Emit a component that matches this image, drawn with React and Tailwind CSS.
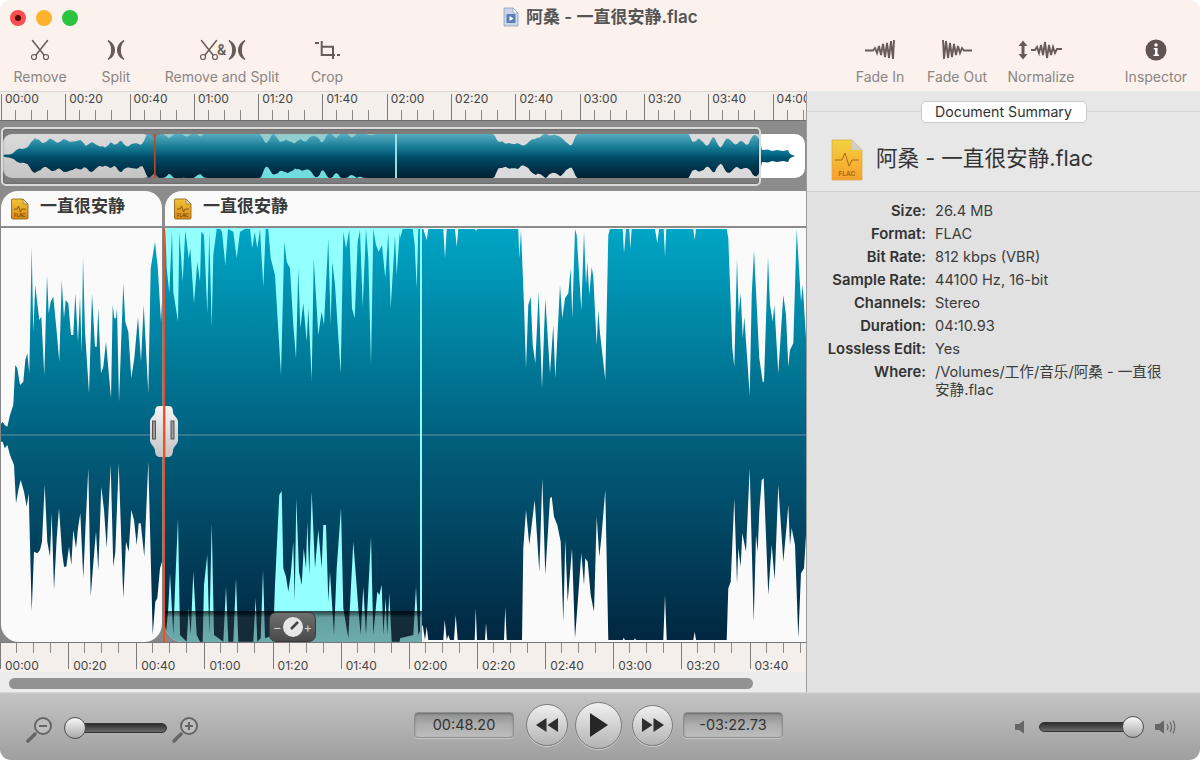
import React from "react";

const pairs = (a, ox, oy) => {
  const out = [];
  for (let i = 0; i < a.length; i += 2) out.push([ox + a[i] / 3, oy + a[i + 1] / 3 - 228]);
  return out;
};
const T1 = [0,600,8,590,14,600,22,605,30,570,40,540,46,420,52,430,60,480,70,470,76,405,82,385,88,445,95,65,100,320,106,180,112,235,118,285,124,275,133,450,141,150,146,265,152,230,160,215,170,320,178,410,185,165,192,280,197,225,205,235,213,330,220,330,226,205,234,350,240,215,245,385,249,95,255,320,267,505,276,205,285,365,290,365,295,250,303,445,310,425,318,350,322,395,333,520,338,240,343,280,348,280,351,250,357,530,370,175,376,290,385,320,394,460,403,400,414,275,423,410,431,240,445,505,452,130,465,50,473,125,483,290,490,150,496,12,500,130,508,205,516,15,520,200,534,290,538,20,548,170,556,15,566,100,571,70,582,235,592,110,600,170,604,20,612,30,622,265,628,20,635,305,640,90,650,12,660,12,666,20,676,120,684,12,700,20,710,100,720,20,735,12,750,12,757,70,764,20,772,70,780,12,790,185,797,12,805,12,812,100,825,150,843,450,853,50,860,110,870,130,880,300,888,400,895,130,901,310,910,235,920,350,925,250,935,465,941,100,955,330,965,260,972,300,985,40,992,300,997,110,1005,180,1022,445,1030,20,1038,70,1048,15,1056,250,1064,280,1073,50,1080,15,1088,245,1098,12,1105,100,1113,420,1120,12,1128,60,1136,80,1146,60,1156,160,1165,20,1172,250,1185,30,1190,150,1199,20];
const T2 = [0,40,8,12,38,12,44,60,50,190,55,12,70,12,80,45,85,12,130,12,135,100,140,12,165,12,170,65,175,12,225,12,228,18,232,12,355,12,358,100,363,15,372,240,378,430,385,240,392,215,398,360,406,415,416,200,426,490,436,220,450,445,460,300,466,460,480,180,487,280,495,220,505,205,512,130,517,280,525,12,530,30,544,255,552,20,558,180,562,110,568,210,575,125,580,155,590,360,595,255,600,325,616,465,625,30,630,12,668,12,672,85,678,12,688,12,691,70,695,12,765,12,772,55,777,12,791,12,795,95,799,12,880,12,884,45,888,12,980,12,985,40,997,370,1003,425,1011,100,1016,265,1022,205,1028,340,1033,275,1049,510,1055,210,1062,75,1078,400,1088,470,1092,470,1104,95,1110,240,1118,290,1123,240,1135,445,1150,210,1158,270,1165,425,1170,375,1180,355,1190,12,1195,95,1203,230,1208,180,1218,340];
const B1 = [0,20,8,20,14,40,22,30,30,60,42,90,48,205,56,160,62,135,72,170,80,215,86,175,95,530,102,350,112,355,120,345,126,320,134,150,142,320,150,365,155,235,162,465,170,310,177,220,186,350,192,395,199,395,207,335,214,390,220,285,228,340,234,280,241,235,250,430,256,290,265,100,272,485,280,385,288,290,295,405,304,155,312,225,320,340,332,90,340,395,346,350,356,85,370,490,378,320,386,350,394,225,402,255,410,330,416,265,422,265,433,365,445,80,458,600,466,500,472,490,480,400,486,380,490,400,496,620,505,520,510,415,520,600,526,440,534,250,540,600,560,620,566,520,572,600,580,410,590,600,600,620,608,620,612,450,622,360,628,600,635,265,642,600,670,620,678,455,685,620,700,620,708,430,715,620,760,620,767,490,772,620,782,610,789,405,795,610,820,600,825,450,838,180,845,168,850,400,858,425,865,470,872,420,880,320,884,500,889,190,897,410,905,450,911,340,918,400,922,260,928,420,935,170,945,400,955,285,965,400,970,270,978,270,985,500,990,410,1002,600,1010,400,1023,220,1030,520,1045,610,1060,320,1075,520,1082,600,1090,455,1098,600,1113,305,1120,600,1132,470,1138,480,1145,450,1150,600,1157,490,1162,600,1168,475,1175,620,1199,620];
const B2 = [0,610,40,600,48,455,55,600,68,570,75,615,80,575,85,615,130,615,134,555,140,615,145,600,150,615,162,615,167,540,173,615,224,615,227,520,231,615,255,615,258,565,262,615,312,615,316,517,320,615,366,615,370,340,378,225,388,330,404,195,418,410,427,130,436,420,450,190,455,185,462,245,472,270,482,320,490,560,496,315,503,500,516,340,525,610,532,520,544,355,552,450,556,370,563,380,572,480,582,530,590,245,598,365,604,310,616,165,625,615,668,615,671,608,675,615,702,615,705,610,708,615,790,615,795,480,800,615,880,615,884,590,888,615,980,615,985,460,992,440,1003,190,1011,445,1015,340,1022,395,1027,295,1038,350,1049,100,1061,560,1068,300,1073,350,1078,230,1085,135,1091,130,1105,480,1115,330,1124,435,1135,150,1150,380,1160,270,1165,210,1170,330,1175,280,1185,330,1195,610,1203,415,1212,400,1218,300];

const TOP = [...pairs(T1, 0, 225), ...pairs(T2, 400, 225)];
const BOT = [...pairs(B1, 0, 435), ...pairs(B2, 400, 435)];
const fmt = (p) => p.map(([x, y]) => `${x.toFixed(1)} ${y.toFixed(1)}`).join(" L");
const WAVE = `M0 207 L${fmt(TOP)} L806 ${TOP[TOP.length - 1][1].toFixed(1)} L806 ${BOT[BOT.length - 1][1].toFixed(1)} L${fmt([...BOT].reverse())} L0 207 Z`;

const at = (pts, x) => {
  for (let i = 1; i < pts.length; i++) {
    if (pts[i][0] >= x) {
      const [a, b] = [pts[i - 1], pts[i]];
      const t = b[0] === a[0] ? 0 : (x - a[0]) / (b[0] - a[0]);
      return a[1] + (b[1] - a[1]) * t;
    }
  }
  return pts[pts.length - 1][1];
};
const smooth = (pts, x) => {
  let s = 0;
  for (let k = -3; k <= 3; k += 1) s += Math.abs(at(pts, x + k) - 207);
  return s / 7;
};
const ovTop = [];
const ovBot = [];
for (let x = 2; x <= 804; x += 2) {
  const ox = 3 + (x / 1.058) * 0.9962;
  ovTop.push([ox, 35 - Math.min(22, (smooth(TOP, x) * 22 * 1.2) / 207)]);
  ovBot.push([ox, 35 + Math.min(22, (smooth(BOT, x) * 22 * 1.2) / 207)]);
}
const tailT = [[762, 29], [768, 28.5], [772, 30], [777, 29], [783, 30], [788, 29], [790, 33], [795, 35]];
const tailB = [[762, 41], [768, 41.5], [772, 40], [777, 41], [783, 40], [788, 41], [790, 37], [795, 35]];
const OVERVIEW = `M3 35 L${fmt(ovTop)} L${fmt(tailT)} L${fmt([...tailB].reverse())} L${fmt([...ovBot].reverse())} Z`;

const SANS = "font-['Inter','Noto_Sans_CJK_SC',sans-serif]";

const Wave = ({ viewBox, w, id }) => (
  <svg width={w} height="414" viewBox={viewBox} className="block">
    <defs>
      <linearGradient id={id} gradientUnits="userSpaceOnUse" x1="0" y1="0" x2="0" y2="414">
        <stop offset="0" stopColor="#00a6c6" />
        <stop offset="0.5" stopColor="#01617f" />
        <stop offset="1" stopColor="#012640" />
      </linearGradient>
    </defs>
    <rect x="165" y="0" width="256" height="414" fill="#93ffff" />
    <path d={WAVE} fill={`url(#${id})`} />
    <line x1="0" x2="806" y1="207" y2="207" stroke="#8fa3ad" strokeOpacity="0.75" strokeWidth="1" />
    <rect x="420" y="0" width="2" height="414" fill="#8ffcff" />
  </svg>
);

const Ruler = ({ labels, top }) =>
  top ? (
    <div className="flex h-[30px] overflow-hidden border-b border-t border-[#6e6e6e] border-t-[#dcd8d5] bg-[#f4efeb] pl-px pt-[2px]">
      {labels.map((l) => (
        <div key={l} className="flex w-[64.3px] flex-none flex-col justify-between border-l border-[#7a7a7a]">
          <div className="mt-[-1px] pl-[3px] text-[12px] leading-[12px] text-[#444]">{l}</div>
          <div className="ml-[13px] flex h-[10px] gap-[15px]">
            <i className="w-px bg-[#8a8a8a]" />
            <i className="w-px bg-[#8a8a8a]" />
            <i className="w-px bg-[#8a8a8a]" />
          </div>
        </div>
      ))}
    </div>
  ) : (
    <div className="flex h-[30px] overflow-hidden border-t border-[#777] bg-[#f4efeb] pb-[3px]">
      {labels.map((l) => (
        <div key={l} className="flex w-[68.15px] flex-none flex-col justify-between border-l border-[#7a7a7a]">
          <div className="ml-[15px] flex h-[10px] gap-[16px]">
            <i className="w-px bg-[#8a8a8a]" />
            <i className="w-px bg-[#8a8a8a]" />
            <i className="w-px bg-[#8a8a8a]" />
          </div>
          <div className="mb-[-3px] pl-[4px] text-[12px] leading-[12px] text-[#444]">{l}</div>
        </div>
      ))}
    </div>
  );

const ICON = "#675c58";

const ScissorsG = ({ x = 0 }) => (
  <g transform={`translate(${x} 0)`} stroke={ICON} fill="none" strokeLinecap="round">
    <path d="M4.5 2.5 L16 17" strokeWidth="1.5" />
    <path d="M19.5 2.5 L8 17" strokeWidth="1.5" />
    <circle cx="6" cy="19" r="2.5" strokeWidth="1.2" />
    <circle cx="18" cy="19" r="2.5" strokeWidth="1.2" />
  </g>
);
const SplitG = ({ x = 0 }) => (
  <g transform={`translate(${x} 0)`} stroke={ICON} strokeLinecap="round" fill={ICON}>
    <path d="M3 2.5 C11.5 7 11.5 17 3 21.5 C8 17 8 7 3 2.5Z" strokeWidth="1.3" />
    <path d="M19 2.5 C10.5 7 10.5 17 19 21.5 C14 17 14 7 19 2.5Z" strokeWidth="1.3" />
  </g>
);
const Icons = {
  remove: (
    <svg width="24" height="24" viewBox="0 0 24 24"><ScissorsG /></svg>
  ),
  split: (
    <svg width="22" height="24" viewBox="0 0 22 24"><SplitG /></svg>
  ),
  both: (
    <svg width="50" height="24" viewBox="0 0 50 24">
      <ScissorsG x="0" />
      <text x="20" y="17" fontSize="14" fontWeight="600" fill={ICON} fontFamily="Inter">&amp;</text>
      <SplitG x="29" />
    </svg>
  ),
  crop: (
    <svg width="28" height="24" viewBox="0 0 28 24" fill="none" stroke={ICON} strokeWidth="2">
      <path d="M8 8.7 H20 V21" />
      <path d="M8.7 3 V17 H22" />
      <path d="M2 5 H6" />
      <path d="M24 17 H27" />
    </svg>
  ),
  fadeIn: (
    <svg width="32" height="24" viewBox="0 0 32 24" fill="none" stroke={ICON} strokeWidth="1.9" strokeLinejoin="miter">
      <path d="M1 12.5 H9 L11 10 L13 15 L15 8 L17 17 L19 6 L21 19 L23 5 L25 20 L27 3 L29 21 L30 2" />
    </svg>
  ),
  fadeOut: (
    <svg width="32" height="24" viewBox="0 0 32 24" fill="none" stroke={ICON} strokeWidth="1.9">
      <path d="M31 12.5 H23 L21 10 L19 15 L17 8 L15 17 L13 6 L11 19 L9 5 L7 20 L5 3 L3 21 L2 2" />
    </svg>
  ),
  normalize: (
    <svg width="46" height="24" viewBox="0 0 46 24" fill="none">
      <path d="M5 6 V18" stroke={ICON} strokeWidth="3" />
      <path d="M0.5 8 L5 2.5 L9.5 8Z M0.5 16 L5 21.5 L9.5 16Z" fill={ICON} />
      <path d="M13 12 H17 L19 9 L21 15 L23 7 L25 17 L27 4 L29 20 L31 7 L33 17 L35 9 L37 15 L39 11 H44" stroke={ICON} strokeWidth="1.9" />
    </svg>
  ),
  info: (
    <svg width="24" height="24" viewBox="0 0 24 24">
      <circle cx="12" cy="12" r="10.5" fill="#5f5451" />
      <circle cx="12" cy="7" r="1.7" fill="#fff" />
      <path d="M9.7 10 H13.6 V16.4 H15 V18 H9.5 V16.4 H11 V11.6 H9.7Z" fill="#fff" />
    </svg>
  ),
};

const Tool = ({ w, icon, label }) => (
  <div className={`${w} flex flex-none flex-col items-center`}>
    <div className="flex h-[24px] items-center">{icon}</div>
    <div className="mt-[6px] text-[14px] leading-[18px] text-[#8a8583] whitespace-nowrap">{label}</div>
  </div>
);

const FlacIcon = () => (
  <svg width="20" height="22" viewBox="0 0 20 22" className="flex-none">
    <defs>
      <linearGradient id="tabflac" x1="0" y1="0" x2="0" y2="1">
        <stop offset="0" stopColor="#f0c43a" />
        <stop offset="1" stopColor="#d98a14" />
      </linearGradient>
    </defs>
    <path d="M2.5 1 H13 L18 6 V20 Q18 21 17 21 H3 Q1.5 21 1.5 20 V2 Q1.5 1 2.5 1Z" fill="url(#tabflac)" stroke="#8a5a10" strokeWidth="0.8" />
    <path d="M13 1 V6 H18Z" fill="#d9d2b8" stroke="#8a5a10" strokeWidth="0.5" />
    <path d="M4 11 H7 L8.5 8 L10.5 14 L12 11 H16" stroke="#7a4a10" strokeWidth="0.8" fill="none" />
    <text x="9.8" y="19" fontSize="4.4" fontWeight="700" textAnchor="middle" fill="#7a4a10" fontFamily="Inter">FLAC</text>
  </svg>
);

const ClipTab = ({ className, pad }) => (
  <div className={`${className} flex items-center bg-[#fafafa]`}>
    <div className={`${pad} flex items-center gap-[10px]`}>
      <FlacIcon />
      <span className="mb-[5px] text-[17px] font-semibold leading-[22px] text-[#3a3a3a]">一直很安静</span>
    </div>
  </div>
);

const Lens = ({ plus }) => (
  <svg width="32" height="32" viewBox="0 0 32 32" className="flex-none">
    <path d="M10 23 L3 30" stroke="#666" strokeWidth="3.4" strokeLinecap="round" />
    <circle cx="18" cy="15" r="8" fill="#bdbdbd" stroke="#666" strokeWidth="2" />
    <path d="M14 15 H22" stroke="#666" strokeWidth="2.2" />
    {plus && <path d="M18 11 V19" stroke="#666" strokeWidth="2.2" />}
  </svg>
);

const Thumb = ({ className }) => (
  <div className={`${className} absolute top-[-7px] h-[22px] w-[22px] rounded-full border-[1.5px] border-[#4d4d4d] bg-gradient-to-b from-[#f8f8f8] to-[#a9a9a9]`} />
);

const Track = ({ className, children }) => (
  <div className={`${className} relative h-[10px] rounded-full border border-[#333] bg-gradient-to-b from-[#2f2f2f] to-[#6a6a6a]`}>{children}</div>
);

const TimeBox = ({ children, className = "" }) => (
  <div className={`${className} flex h-[26px] w-[100px] flex-none items-center justify-center rounded-[4px] border border-[#8f8f8f] bg-gradient-to-b from-[#8f9090] via-[#aeaeae] to-[#bdbdbd] text-[14.5px] text-[#333] shadow-[inset_0_1px_2px_rgba(0,0,0,0.25),0_1px_0_rgba(255,255,255,0.35)]`}>
    {children}
  </div>
);

const RoundBtn = ({ className, children }) => (
  <div className={`${className} flex flex-none items-center justify-center rounded-full border-[1.5px] border-[#7b7b7b] bg-gradient-to-b from-[#f0f0f0] to-[#b4b4b4] shadow-[0_1px_0_rgba(255,255,255,0.45)]`}>
    {children}
  </div>
);

const Row = ({ k, children }) => (
  <>
    <div className="text-right text-[14.8px] font-semibold leading-[23px] text-[#333] whitespace-nowrap">{k}</div>
    <div className="text-[14.6px] leading-[23px] text-[#3c3c3c]">{children}</div>
  </>
);

export default function App() {
  const topL = ["00:00","00:20","00:40","01:00","01:20","01:40","02:00","02:20","02:40","03:00","03:20","03:40","04:00"];
  const botL = topL.slice(0, 12);
  return (
    <div className="h-[760px] w-[1200px] bg-white">
      <div className={`${SANS} flex h-[760px] w-[1200px] flex-col overflow-hidden rounded-[11px]`}>
        {/* toolbar */}
        <div className="relative h-[91px] flex-none bg-[#fbf2ee] pt-[38px]">
          <div className="absolute left-[10px] top-[10px] flex gap-[10px]">
            <div className="flex h-[16px] w-[16px] items-center justify-center rounded-full bg-[#f94f4f]">
              <div className="h-[6px] w-[6px] rounded-full bg-[#5a0505]" />
            </div>
            <div className="h-[16px] w-[16px] rounded-full bg-[#fdb32e]" />
            <div className="h-[16px] w-[16px] rounded-full bg-[#2bc43e]" />
          </div>
          <div className="absolute left-[502px] top-[7px] flex items-center gap-[7px]">
            <svg width="17" height="20" viewBox="0 0 17 20">
              <path d="M2 1 H11 L16 6 V19 H2Z" fill="#c8d6e6" stroke="#8ea0b5" strokeWidth="0.8" />
              <path d="M11 1 V6 H16Z" fill="#eef3f8" stroke="#8ea0b5" strokeWidth="0.6" />
              <rect x="4.5" y="7" width="9" height="9" rx="1" fill="#5b7fb5" />
              <path d="M7.5 9 L11.5 11.5 L7.5 14Z" fill="#fff" />
            </svg>
            <span className="text-[17px] font-semibold leading-[20px] text-[#555]">阿桑 - 一直很安静.flac</span>
          </div>
          <div className="flex">
            <Tool w="w-[80px]" icon={Icons.remove} label="Remove" />
            <Tool w="w-[72px]" icon={Icons.split} label="Split" />
            <Tool w="w-[140px]" icon={Icons.both} label="Remove and Split" />
            <Tool w="w-[70px]" icon={Icons.crop} label="Crop" />
            <div className="flex-1" />
            <Tool w="w-[76px]" icon={Icons.fadeIn} label="Fade In" />
            <Tool w="w-[78px]" icon={Icons.fadeOut} label="Fade Out" />
            <Tool w="w-[90px]" icon={Icons.normalize} label="Normalize" />
            <div className="w-[26px] flex-none" />
            <Tool w="w-[88px]" icon={Icons.info} label="Inspector" />
          </div>
        </div>

        {/* middle */}
        <div className="flex h-[601px] flex-none">
          <div className="flex w-[807px] flex-none flex-col border-r border-[#9c9c9c]">
            <Ruler labels={topL} top />
            {/* overview */}
            <div className="relative h-[70px] flex-none bg-[#8c8c8c] pl-[3px] pt-[13px]">
              <div className="flex h-[44px] gap-[4px]">
                <div className="w-[149px] flex-none rounded-[9px] bg-gradient-to-b from-[#f4f4f4] to-[#dcdcdc]" />
                <div className="flex w-[649px] flex-none overflow-hidden rounded-[10px]">
                  <div className="w-[242px] flex-none bg-gradient-to-b from-[#a4e4e6] to-[#78f8fa]" />
                  <div className="w-[363px] flex-none bg-[#f4f4f4]" />
                  <div className="flex-1 bg-white" />
                </div>
              </div>
              <svg width="806" height="70" viewBox="0 0 806 70" className="absolute left-0 top-0">
                <defs>
                  <linearGradient id="ovw" gradientUnits="userSpaceOnUse" x1="0" y1="13" x2="0" y2="57">
                    <stop offset="0" stopColor="#62c0d6" />
                    <stop offset="0.3" stopColor="#1a8aa8" />
                    <stop offset="0.5" stopColor="#01607f" />
                    <stop offset="0.52" stopColor="#015675" />
                    <stop offset="1" stopColor="#002338" />
                  </linearGradient>
                </defs>
                <path d={OVERVIEW} fill="url(#ovw)" />
                <rect x="154" y="13" width="1.6" height="44" fill="#c9532c" />
                <rect x="395" y="13" width="2" height="44" fill="#a9f8f8" />
              </svg>
              <div className="absolute left-[1px] top-[6px] h-[59px] w-[760px] rounded-[5px] border-2 border-[#dadada] bg-[rgba(0,0,0,0.1)] shadow-[inset_0_0_2px_rgba(0,0,0,0.4)]" />
            </div>
            {/* clip tabs */}
            <div className="flex h-[37px] flex-none gap-[3px] border-b-2 border-[#8a8a8a] bg-[#8c8c8c] pl-px">
              <ClipTab className="w-[161px] flex-none rounded-t-[17px]" pad="pl-[9px]" />
              <ClipTab className="flex-1 rounded-tl-[17px]" pad="pl-[8px]" />
            </div>
            {/* waveform */}
            <div className="relative flex h-[414px] flex-none gap-[3px] bg-[#868686] pl-px">
              <div className="h-[414px] w-[161px] flex-none overflow-hidden rounded-b-[18px] bg-[#fafafa]">
                <Wave id="wa" w="161" viewBox="1 0 161 414" />
              </div>
              <div className="h-[414px] w-[641px] flex-none overflow-hidden rounded-bl-[18px] bg-[#fafafa]">
                <Wave id="wb" w="641" viewBox="165 0 641 414" />
              </div>
              {/* dim strip */}
              <div className="absolute bottom-0 left-[165px] h-[31px] w-[257px] rounded-bl-[18px] bg-gradient-to-b from-[rgba(0,0,0,0.72)] via-[rgba(45,42,48,0.45)] via-20% to-[rgba(50,48,52,0.4)]" />
              {/* orange playhead */}
              <div className="absolute bottom-0 left-[163px] top-0 w-[2.4px] bg-[#e8512a]" />
              {/* handle */}
              <svg width="30" height="52" viewBox="0 0 30 52" className="absolute left-[149px] top-[178px]">
                <defs>
                  <linearGradient id="hg" x1="0" y1="0" x2="0" y2="1">
                    <stop offset="0" stopColor="#f4f4f4" />
                    <stop offset="1" stopColor="#c4c4c4" />
                  </linearGradient>
                </defs>
                <path d="M10 0 H20 C23 0 24 3 24 6 C24 10 29 11 29 16 V34 C29 39 24 40 24 45 C24 48 22 51 20 51 H10 C8 51 6 48 6 45 C6 40 1 39 1 34 V16 C1 11 6 10 6 6 C6 3 7 0 10 0Z" fill="url(#hg)" />
                <rect x="3.5" y="15" width="3" height="18" fill="#999" stroke="#555" strokeWidth="1" />
                <rect x="22" y="15" width="3" height="18" fill="#999" stroke="#555" strokeWidth="1" />
                <rect x="14" y="0" width="2.4" height="52" fill="#e8512a" />
              </svg>
              {/* knob */}
              <div className="absolute left-[269px] top-[384px] flex h-[30px] w-[47px] items-center justify-between rounded-[7px] border border-[#3a3a3a] bg-gradient-to-b from-[#6e6e6e] to-[#4a4a4a] px-[3px] text-[13px] leading-none text-[#cfcfcf]">
                <span>−</span>
                <svg width="20" height="20" viewBox="0 0 20 20">
                  <circle cx="10" cy="10" r="10" fill="#e6e6e6" />
                  <path d="M8 12 L15 5" stroke="#444" strokeWidth="2.6" />
                </svg>
                <span>+</span>
              </div>
            </div>
            <Ruler labels={botL} />
            {/* scroll */}
            <div className="h-[20px] flex-none bg-[#ececec] pl-[9px] pt-[6px]">
              <div className="h-[11px] w-[744px] rounded-full bg-[#929292]" />
            </div>
          </div>

          {/* inspector */}
          <div className="flex flex-1 flex-col bg-[#e1e1e1]">
            <div className="h-[101px] flex-none border-b border-[#cfcfcf] bg-[#e7e7e7]">
              <div className="relative flex h-[32px] items-center justify-center">
                <div className="absolute left-0 right-0 top-[20px] h-px bg-[#d6d6d6]" />
                <div className="relative mt-[10px] flex h-[22px] w-[166px] items-center justify-center rounded-[5px] border border-[#c9c9c9] bg-white text-[14.2px] text-[#333]">Document Summary</div>
              </div>
              <div className="mt-[16px] flex items-center gap-[13px] pl-[24px]">
                <svg width="32" height="42" viewBox="0 0 32 42" className="flex-none">
                  <defs>
                    <linearGradient id="bigflac" x1="0" y1="0" x2="0" y2="1">
                      <stop offset="0" stopColor="#f3d23e" />
                      <stop offset="1" stopColor="#f6a02c" />
                    </linearGradient>
                  </defs>
                  <path d="M1 1 H21 L31 11 V41 H1Z" fill="url(#bigflac)" stroke="#d8a64a" strokeWidth="0.7" />
                  <path d="M21 1 V11 H31Z" fill="#cfcfc8" />
                  <path d="M4 21 H11 L14 14 L18 27 L21 21 H28" stroke="#a8681a" strokeWidth="1" fill="none" />
                  <text x="16" y="37" fontSize="6.5" fontWeight="700" textAnchor="middle" fill="#a8681a" fontFamily="Inter">FLAC</text>
                </svg>
                <span className="mb-[4px] text-[21.6px] leading-[30px] text-[#333] whitespace-nowrap">阿桑 - 一直很安静.flac</span>
              </div>
            </div>
            <div className="grid grid-cols-[119px_235px] gap-x-[9px] pt-[8px]">
              <Row k="Size:">26.4 MB</Row>
              <Row k="Format:">FLAC</Row>
              <Row k="Bit Rate:">812 kbps (VBR)</Row>
              <Row k="Sample Rate:">44100 Hz, 16-bit</Row>
              <Row k="Channels:">Stereo</Row>
              <Row k="Duration:">04:10.93</Row>
              <Row k="Lossless Edit:">Yes</Row>
              <div className="text-right text-[14.8px] font-semibold leading-[23px] text-[#333]">Where:</div>
              <div className="pt-[2px] text-[14.6px] leading-[18px] text-[#3c3c3c]">/Volumes/工作/音乐/阿桑 - 一直很安静.flac</div>
            </div>
          </div>
        </div>

        {/* transport */}
        <div className="grid h-[68px] flex-none grid-cols-[414px_369px_1fr] items-center border-t border-[#d8d8d8] bg-gradient-to-b from-[#c4c4c4] to-[#9f9f9f]">
          <div className="flex items-center pl-[25px]">
            <Lens />
            <Track className="ml-[8px] mt-[2px] w-[102px]"><Thumb className="left-[-2px]" /></Track>
            <div className="ml-[4px]"><Lens plus /></div>
          </div>
          <div className="mb-[3px] flex items-center">
            <TimeBox>00:48.20</TimeBox>
            <RoundBtn className="ml-[12px] h-[42px] w-[42px]">
              <svg width="24" height="16" viewBox="0 0 24 16"><path d="M1 8 L11.5 1 V15Z M12.5 8 L23 1 V15Z" fill="#2e2e2e" /></svg>
            </RoundBtn>
            <RoundBtn className="ml-[7px] h-[47px] w-[47px]">
              <svg width="20" height="26" viewBox="0 0 20 26"><path d="M1 1 L19 13 L1 25Z" fill="#262626" /></svg>
            </RoundBtn>
            <RoundBtn className="ml-[10px] h-[41px] w-[41px]">
              <svg width="24" height="16" viewBox="0 0 24 16"><path d="M1 1 L11.5 8 L1 15Z M12.5 1 L23 8 L12.5 15Z" fill="#2e2e2e" /></svg>
            </RoundBtn>
            <TimeBox className="ml-[10px]">-03:22.73</TimeBox>
          </div>
          <div className="flex items-center justify-end pr-[24px]">
            <svg width="12" height="14" viewBox="0 0 12 14" className="flex-none"><path d="M1 4 H5 L10 0.5 V13.5 L5 10 H1Z" fill="#666" /></svg>
            <Track className="ml-[13px] w-[102px]"><Thumb className="right-[-4px]" /></Track>
            <svg width="22" height="16" viewBox="0 0 22 16" fill="none" className="ml-[13px] flex-none">
              <path d="M1 5 H5 L10 1.5 V14.5 L5 11 H1Z" fill="#666" />
              <path d="M13 5 Q15 8 13 11 M16 3 Q19 8 16 13 M19 1.5 Q22.5 8 19 14.5" stroke="#666" strokeWidth="1.2" />
            </svg>
          </div>
        </div>
      </div>
    </div>
  );
}
